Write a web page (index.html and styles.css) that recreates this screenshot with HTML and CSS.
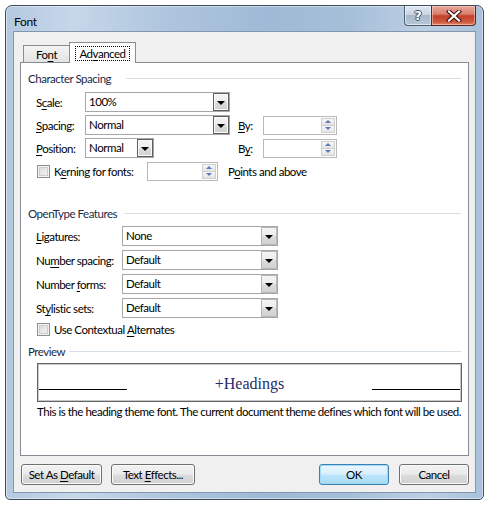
FILE: index.html
```html
<!DOCTYPE html>
<html>
<head>
<meta charset="utf-8">
<title>Font</title>
<link rel="stylesheet" href="styles.css">
</head>
<body>
<div class="window">
  <div class="titlebar">
    <span class="title">Font</span>
    <div class="caption">
      <div class="cap-btn help"><span>?</span></div>
      <div class="cap-btn close">
        <svg width="16" height="12" viewBox="0 0 16 12">
          <path d="M3 1.5 L13 10.5 M13 1.5 L3 10.5" stroke="#3a1010" stroke-width="4.2" stroke-linecap="square"/>
          <path d="M3 1.5 L13 10.5 M13 1.5 L3 10.5" stroke="#ffffff" stroke-width="2.2" stroke-linecap="square"/>
        </svg>
      </div>
    </div>
  </div>
  <div class="client">
    <div class="tabs">
      <div class="tab"><span>Fo<u>n</u>t</span></div>
      <div class="tab active"><span class="focus">Ad<u>v</u>anced</span></div>
    </div>
    <div class="panel">
      <div class="group-head wide"><span>Character Spacing</span></div>

      <div class="row cs-first">
        <span class="lbl cs">S<u>c</u>ale:</span>
        <div class="combo hot w-long"><span class="val">100%</span><span class="drop"><i class="tri"></i></span></div>
      </div>
      <div class="row cs">
        <span class="lbl cs"><u>S</u>pacing:</span>
        <div class="combo hot w-long"><span class="val">Normal</span><span class="drop"><i class="tri"></i></span></div>
        <span class="by"><u>B</u>y:</span>
        <div class="spin w-by"><span class="spin-field"></span><span class="spin-btns"><span class="up"><i class="stri up-t"></i></span><span class="dn"><i class="stri dn-t"></i></span></span></div>
      </div>
      <div class="row cs">
        <span class="lbl cs"><u>P</u>osition:</span>
        <div class="combo hot w-short"><span class="val">Normal</span><span class="drop"><i class="tri"></i></span></div>
        <span class="by by2">B<u>y</u>:</span>
        <div class="spin w-by"><span class="spin-field"></span><span class="spin-btns"><span class="up"><i class="stri up-t"></i></span><span class="dn"><i class="stri dn-t"></i></span></span></div>
      </div>
      <div class="row cs">
        <span class="check"></span>
        <span class="check-lbl kern">K<u>e</u>rning for fonts:</span>
        <div class="spin w-kern"><span class="spin-field"></span><span class="spin-btns"><span class="up"><i class="stri up-t"></i></span><span class="dn"><i class="stri dn-t"></i></span></span></div>
        <span class="after">P<u>o</u>ints and above</span>
      </div>

      <div class="group-head ot"><span>OpenType Features</span></div>

      <div class="row ot-first">
        <span class="lbl ot"><u>L</u>igatures:</span>
        <div class="combo w-ot"><span class="val">None</span><span class="drop"><i class="tri"></i></span></div>
      </div>
      <div class="row ot">
        <span class="lbl ot">Nu<u>m</u>ber spacing:</span>
        <div class="combo w-ot"><span class="val">Default</span><span class="drop"><i class="tri"></i></span></div>
      </div>
      <div class="row ot">
        <span class="lbl ot">Number <u>f</u>orms:</span>
        <div class="combo w-ot"><span class="val">Default</span><span class="drop"><i class="tri"></i></span></div>
      </div>
      <div class="row ot">
        <span class="lbl ot">St<u>y</u>listic sets:</span>
        <div class="combo w-ot"><span class="val">Default</span><span class="drop"><i class="tri"></i></span></div>
      </div>
      <div class="row alt">
        <span class="check"></span>
        <span class="check-lbl">Use Contextual <u>A</u>lternates</span>
      </div>

      <div class="group-head pv"><span>Preview</span></div>
      <div class="preview">
        <span class="pline"></span>
        <span class="ptext">+Headings</span>
        <span class="pline"></span>
      </div>
      <div class="desc">This is the heading theme font. The current document theme defines which font will be used.</div>
    </div>
    <div class="buttons">
      <div class="btn b-default"><span>Set As <u>D</u>efault</span></div>
      <div class="btn b-effects"><span>Text <u>E</u>ffects...</span></div>
      <div class="spacer"></div>
      <div class="btn b-ok primary"><span>OK</span></div>
      <div class="btn b-cancel"><span>Cancel</span></div>
    </div>
  </div>
</div>
</body>
</html>
```

FILE: styles.css
```css
* { box-sizing: border-box; }

html, body {
  margin: 0;
  padding: 0;
  background: #ffffff;
}

body {
  font-family: Lato, "Liberation Sans", sans-serif;
  font-size: 11.5px;
  letter-spacing: -0.47px;
  color: #000;
  white-space: nowrap;
}

u { text-decoration: underline; text-underline-offset: 2px; }

.window {
  margin: 5px 0 0 5px;
  width: 479px;
  height: 495px;
  border: 1px solid #3f4c5b;
  border-radius: 7px 7px 5px 5px;
  background: linear-gradient(to right, #b4c9e0 0%, #c6d7e9 14%, #aec5de 34%, #9fb9d6 55%, #a6bfd9 72%, #bccfe3 88%, #a9c1db 100%);
  box-shadow: inset 0 0 0 1px rgba(255,255,255,0.45);
  padding: 0 7px 6px 7px;
  display: flex;
  flex-direction: column;
}

.titlebar {
  height: 25px;
  display: flex;
  align-items: flex-start;
  justify-content: space-between;
}

.title {
  margin-left: 1px;
  margin-top: 8px;
  font-size: 12px;
  line-height: 15px;
  letter-spacing: -0.3px;
  color: #000;
}

.caption {
  display: flex;
  margin-right: 0;
}

.cap-btn {
  height: 20px;
  display: flex;
  align-items: center;
  justify-content: center;
  border: 1px solid #4f5e70;
  border-top: none;
}

.help {
  width: 27px;
  border-radius: 0 0 0 4px;
  border-right: none;
  background: linear-gradient(#dfe7f0 0%, #c9d5e3 45%, #a9b9cc 50%, #b7c6d7 100%);
  box-shadow: inset 0 0 0 1px rgba(255,255,255,0.55);
}

.help span {
  font-family: "DejaVu Sans", sans-serif;
  font-weight: bold;
  font-size: 13px;
  line-height: 13px;
  letter-spacing: 0;
  color: #ffffff;
  text-shadow: 1px 0 0 #3d4d60, -1px 0 0 #3d4d60, 0 1px 0 #3d4d60, 0 -1px 0 #3d4d60;
}

.close {
  width: 45px;
  border-radius: 0 0 4px 0;
  border-color: #5c2620;
  background: linear-gradient(#e8a798 0%, #d9806c 42%, #c3412c 52%, #cf5a3f 85%, #de8a6f 100%);
  box-shadow: inset 0 0 0 1px rgba(255,220,210,0.5);
}

.client {
  flex: 1;
  background: #f0f0f0;
  border: 1px solid #8296ad;
  padding: 10px 6px 0 6px;
  display: flex;
  flex-direction: column;
}

/* tabs */
.tabs {
  display: flex;
  align-items: flex-end;
  height: 20px;
  padding-left: 3px;
  position: relative;
  z-index: 1;
}

.tab {
  height: 17px;
  width: 47px;
  border: 1px solid #898c95;
  border-bottom: none;
  background: linear-gradient(#f3f3f3, #e3e3e3);
  display: flex;
  justify-content: center;
  line-height: 15px;
  padding-top: 1px;
}

.tab.active {
  height: 21px;
  width: 67px;
  margin-left: -1px;
  margin-bottom: -1px;
  background: #ffffff;
  padding: 3px 0 0 0;
}

.focus {
  display: block;
  height: 15px;
  line-height: 13px;
  padding: 0 3px;
  border: 1px dotted #000;
}

.panel {
  height: 394px;
  border: 1px solid #898c95;
  background: #ffffff;
  padding: 8px 6px 0 7px;
  display: flex;
  flex-direction: column;
}

/* group headers */
.group-head {
  display: flex;
  align-items: center;
  height: 15px;
  line-height: 15px;
  color: #1b2a48;
}

.group-head::after {
  content: "";
  flex: 1;
  height: 1px;
  margin-left: 7px;
  margin-right: 1px;
  background: #d5dfe5;
}

.group-head.wide::after { margin-left: 15px; }
.group-head.pv::after { margin-left: 4px; }

.group-head.ot { margin-top: 25px; }
.group-head.pv { margin-top: 6px; }

/* rows */
.row {
  display: flex;
  align-items: center;
  height: 20px;
  padding-left: 8px;
}

.row.cs-first { margin-top: 6px; }
.row.cs { margin-top: 3px; }
.row.ot-first { margin-top: 5px; }
.row.ot { margin-top: 4px; }
.row.alt { margin-top: 3px; height: 17px; }

.lbl { line-height: 15px; }
.lbl.cs { width: 49px; }
.lbl.ot { width: 86px; }

.combo {
  display: flex;
  align-items: stretch;
  height: 20px;
  border: 1px solid #a7a7a7;
  background: #fff;
}

.w-long { width: 145px; }
.w-short { width: 69px; }
.w-ot { width: 156px; }

.val {
  flex: 1;
  padding-left: 3px;
  line-height: 18px;
}

.drop {
  width: 16px;
  border: 1px solid #b8b8b8;
  background: linear-gradient(#f4f4f4 0%, #ebebeb 50%, #dcdcdc 51%, #d0d0d0 100%);
  display: flex;
  align-items: center;
  justify-content: center;
}

.combo.hot .drop {
  border-color: #5e5e5e;
  box-shadow: inset 0 0 0 1px #fafafa;
}

.tri {
  width: 0;
  height: 0;
  border-left: 4px solid transparent;
  border-right: 4px solid transparent;
  border-top: 4px solid #000;
  margin-top: 1px;
}

.by {
  margin-left: 8px;
  width: 25px;
  line-height: 15px;
}

.by2 { margin-left: 84px; }

.spin {
  display: flex;
  height: 19px;
  border: 1px solid #b9b9b9;
  background: #fff;
}

.w-by { width: 74px; }
.w-kern { width: 71px; margin-left: 13px; }

.spin-field { flex: 1; }

.spin-btns {
  width: 15px;
  display: flex;
  flex-direction: column;
  padding: 1px 1px 1px 0;
}

.spin-btns .up, .spin-btns .dn {
  flex: 1;
  border: 1px solid #cfcfcf;
  background: linear-gradient(#f7f7f7, #e4e4e4);
  display: flex;
  align-items: center;
  justify-content: center;
}

.spin-btns .dn { border-top: none; }

.stri {
  width: 0;
  height: 0;
  border-left: 3px solid transparent;
  border-right: 3px solid transparent;
}

.up-t { border-bottom: 3px solid #5b78b8; }
.dn-t { border-top: 3px solid #5b78b8; }

.check {
  width: 13px;
  height: 13px;
  margin-left: 1px;
  border: 1px solid #8e8f8f;
  background: linear-gradient(135deg, #d8d8d8, #f6f6f6);
  box-shadow: inset 0 0 0 1px #f4f4f4, inset 0 0 0 2px #cdcdcd;
}

.check-lbl {
  margin-left: 4px;
  line-height: 15px;
}

.check-lbl.kern { width: 80px; }

.after {
  margin-left: 10px;
  line-height: 15px;
}

/* preview */
.preview {
  margin: 4px 0 0 9px;
  width: 425px;
  height: 39px;
  border: 1px solid #646464;
  box-shadow: inset 0 0 0 1px #c8c8c8;
  display: flex;
  align-items: flex-end;
  padding: 0 1px 11px 1px;
}

.pline {
  width: 88px;
  height: 1px;
  background: #000;
}

.ptext {
  flex: 1;
  text-align: center;
  font-family: "Liberation Serif", serif;
  font-size: 16px;
  line-height: 16px;
  letter-spacing: 0;
  color: #1f2a66;
  margin-bottom: -2px;
}

.desc {
  margin: 2px 0 0 9px;
  line-height: 15px;
}

/* buttons */
.buttons {
  display: flex;
  margin-top: 8px;
  height: 21px;
  padding-left: 1px;
}

.spacer { flex: 1; }

.btn {
  height: 21px;
  border: 1px solid #707070;
  border-radius: 3px;
  background: linear-gradient(#f2f2f2 0%, #ebebeb 48%, #dddddd 52%, #cfcfcf 100%);
  box-shadow: inset 0 0 0 1px #fbfbfb;
  display: flex;
  align-items: center;
  justify-content: center;
  line-height: 15px;
}

.b-default { width: 81px; }
.b-effects { width: 84px; margin-left: 9px; }
.b-ok { width: 70px; }
.b-cancel { width: 70px; margin-left: 10px; }

.btn.primary {
  border-color: #3c7fb1;
  background: linear-gradient(#eaf6fd 0%, #d9f0fc 48%, #bee6fd 52%, #a7d9f5 100%);
  box-shadow: inset 0 0 0 1px #9fdcf9;
}
```
